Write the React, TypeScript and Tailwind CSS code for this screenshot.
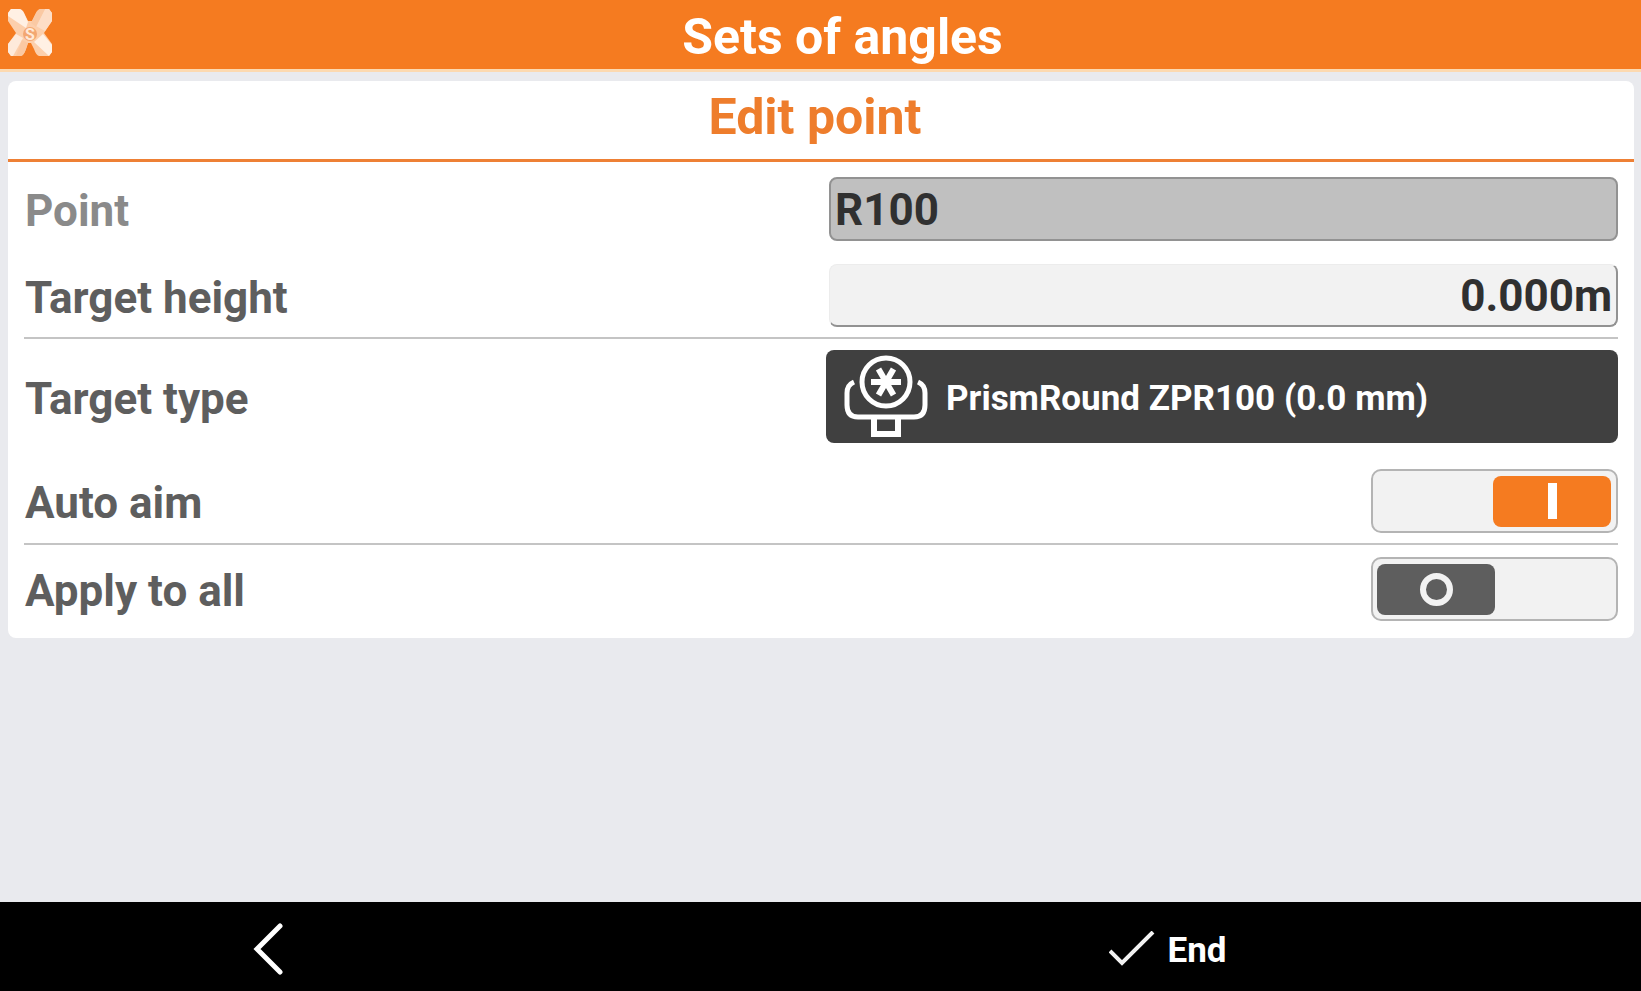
import { useState } from "react";
import type { ReactNode } from "react";

function Logo() {
  return (
    <svg viewBox="0 0 44 48" className="h-12 w-11" aria-hidden="true">
      <path d="M3 0 H11 Q14 0 16 4 L20 12 H24 L28 4 Q30 0 33 0 H41 L44 4 V12 L36 24 L44 35 V43 L41 47 H31 Q28 46 26 40 L23 34 H20 L18 40 Q16 46 13 47 H3 L0 43 V35 L8 24 L0 12 V4 Z" fill="#fccfac" />
      <path d="M3 0 H11 Q14 0 16 4 L20 13 L18 19 L0 7 V4 Z" fill="#fff0e4" />
      <path d="M37 0 H41 L44 4 V12 L37 22 L28 17 Z" fill="#fddec7" />
      <path d="M8 25 L15 29 L5 47 H3 L0 43 V35 Z" fill="#feeadb" />
      <path d="M26 33 L35 25 L44 36 V43 L41 47 Z" fill="#fff0e4" />
      <path d="M33 0 H37 L28 18 L23 14 L28 4 Q30 0 33 0 Z" fill="#fac9a3" />
      <path d="M14 31 L20 34 L18 40 Q16 46 13 47 H8 Z" fill="#fbc8a2" />
      <circle cx="22" cy="25" r="7" fill="#f3a772" />
      <text x="22" y="31" textAnchor="middle" fontSize="16" fontWeight="700" fill="#ffe9d8" className="font-[Roboto,sans-serif]">
        S
      </text>
    </svg>
  );
}

function PrismIcon() {
  return (
    <svg viewBox="0 0 84 84" className="h-[84px] w-[84px] shrink-0" fill="none" stroke="#fff" strokeWidth="5" aria-hidden="true">
      <circle cx="42" cy="27" r="24" />
      <path d="M10 27 Q3 30 3 38 V50 Q3 62 14 62 H70 Q81 62 81 50 V38 Q81 30 74 27" />
      <path d="M30 64 V79 H54 V64" strokeWidth="6" />
      <path d="M27 27 H57 M34.5 14 L49.5 40 M49.5 14 L34.5 40" strokeWidth="6" />
    </svg>
  );
}

function Row({ id, label, muted, className, children }: { id: string; label: string; muted?: boolean; className: string; children: ReactNode }) {
  return (
    <div className={`grid grid-cols-[802fr_792fr] items-center ${className}`}>
      <label htmlFor={id} className={`pt-1 pl-px text-[44px] leading-[52px] font-bold ${muted ? "text-[#8a8a8a]" : "text-[#5e5e5e]"}`}>
        {label}
      </label>
      {children}
    </div>
  );
}

function Toggle({ id, initial }: { id: string; initial: boolean }) {
  const [on, setOn] = useState(initial);
  return (
    <label
      htmlFor={id}
      className={`relative flex h-16 w-[247px] cursor-pointer items-center justify-self-end rounded-[10px] border-2 border-[#b4b4b4] bg-[#f2f2f2] pr-[5px] pl-1 ${on ? "justify-end" : "justify-start"}`}
    >
      <input id={id} type="checkbox" role="switch" checked={on} onChange={(e) => setOn(e.target.checked)} className="sr-only" />
      <span className={`flex h-[51px] w-[118px] items-center justify-center rounded-lg ${on ? "bg-[#f57b20]" : "bg-[#5e5e5e]"}`}>
        {on ? <span className="h-9 w-[9px] bg-white" /> : <span className="h-[33px] w-[33px] rounded-full border-[6px] border-[#f2f2f2]" />}
      </span>
    </label>
  );
}

export default function App() {
  const [height, setHeight] = useState("0.000m");
  return (
    <div className="flex min-h-screen flex-col bg-[#e9eaee] font-[Roboto,sans-serif]">
      <header className="grid h-[72px] grid-cols-[44px_1fr] items-center border-b-3 border-[#fcd9b0] bg-[#f57b20] pr-2 pl-2">
        <div className="pb-1">
          <Logo />
        </div>
        <h1 className="pt-1 text-center text-[50px] leading-[56px] font-bold text-white">Sets of angles</h1>
      </header>

      <main className="flex-1 pt-[9px] pr-[7px] pl-2">
        <section className="rounded-lg bg-white">
          <h2 className="h-[81px] border-b-3 border-[#ee8035] pt-2 pr-3 text-center text-[50px] leading-[56px] font-bold text-[#ee7d2c]">Edit point</h2>
          <div className="px-4 pt-[15px] pb-[17px]">
            <Row id="point" label="Point" muted className="pb-[23px]">
              <input
                id="point"
                disabled
                value="R100"
                className="ml-[3px] h-16 min-w-0 rounded-lg border-2 border-[#929292] bg-[#c0c0c0] px-1 pt-[2px] text-[44px] leading-[52px] font-bold text-[#303030]"
              />
            </Row>
            <Row id="height" label="Target height" className="border-b-2 border-[#c4c4c4] pb-[10px]">
              <input
                id="height"
                value={height}
                onChange={(e) => setHeight(e.target.value)}
                className="ml-[3px] h-[63px] min-w-0 rounded-lg border-t border-r-2 border-b-2 border-l border-t-[#ececec] border-r-[#929292] border-b-[#929292] border-l-[#ececec] bg-[#f2f2f2] px-1 pt-[2px] text-right text-[44px] leading-[52px] font-bold text-[#303030]"
              />
            </Row>
            <Row id="type" label="Target type" className="pt-[11px] pb-[26px]">
              <button id="type" type="button" className="flex h-[93px] items-center gap-[18px] rounded-lg bg-[#404040] pl-[18px] text-left text-[35px] leading-10 font-bold text-white">
                <PrismIcon />
                <span className="pt-1">PrismRound ZPR100 (0.0 mm)</span>
              </button>
            </Row>
            <Row id="aim" label="Auto aim" className="border-b-2 border-[#c4c4c4] pb-[10px]">
              <Toggle id="aim" initial={true} />
            </Row>
            <Row id="all" label="Apply to all" className="pt-3">
              <Toggle id="all" initial={false} />
            </Row>
          </div>
        </section>
      </main>

      <footer className="grid h-[89px] grid-cols-[536fr_159fr_946fr] bg-black text-white">
        <button type="button" aria-label="Back" className="flex items-center justify-center pt-1">
          <svg viewBox="0 0 30 54" className="h-[54px] w-[30px]" fill="none" stroke="#fff" strokeWidth="5" strokeLinecap="round" aria-hidden="true">
            <path d="M27 4 L4 27 L27 50" />
          </svg>
        </button>
        <button type="button" className="col-start-3 flex items-center justify-center gap-3 pt-1 text-[35px] leading-10 font-bold">
          <svg viewBox="0 0 46 36" className="h-9 w-[46px]" fill="none" stroke="#f2f2f2" strokeWidth="4" aria-hidden="true">
            <path d="M1 20 L13 32 L44 1" />
          </svg>
          <span className="pt-1">End</span>
        </button>
      </footer>
    </div>
  );
}
